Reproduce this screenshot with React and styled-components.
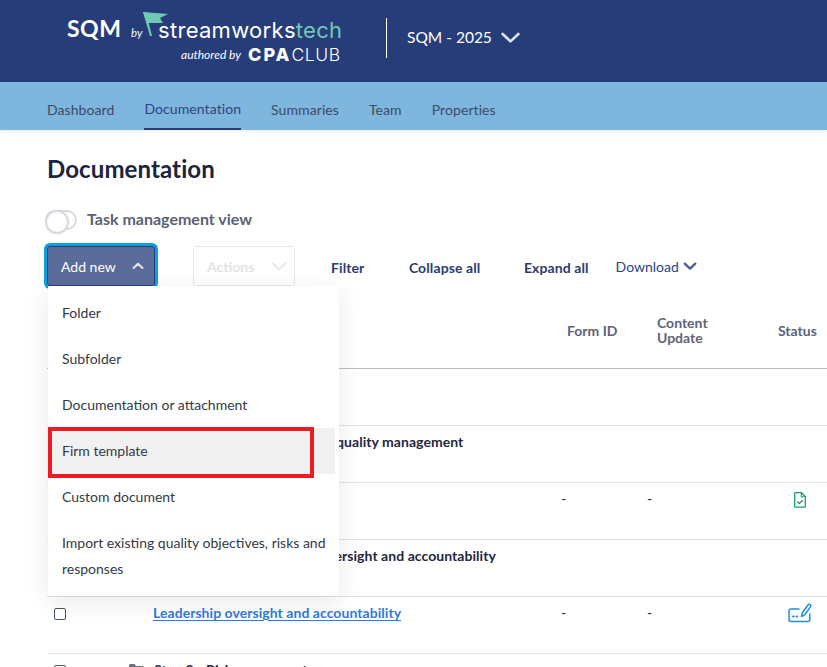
import React from "react";
import styled, { createGlobalStyle } from "styled-components";

const Global = createGlobalStyle`
  html, body { margin: 0; padding: 0; height: 667px; overflow: hidden; background: #fff; }
  body { font-family: Lato, "Liberation Sans", sans-serif; font-size: 14px; color: #1d2540; }
  * { box-sizing: border-box; }
`;

const Page = styled.div`position: relative; width: 827px; height: 667px; overflow: hidden;`;

const Header = styled.header`
  height: 82px; background: #273d7a; display: flex; align-items: flex-start; padding: 12px 0 0 67px; color: #fff;
`;
const Logo = styled.div`width: 319px; display: flex; flex-direction: column; flex: none;`;
const LogoTop = styled.div`display: flex; align-items: flex-start; height: 30px;`;
const Sqm = styled.span`font-size: 23px; font-weight: 700; line-height: 22px; margin-top: 5px; letter-spacing: 0.5px; width: 64px;`;
const By = styled.span`font-style: italic; font-size: 11.5px; line-height: 14px; margin: 14px 0 0 0; width: 12px; opacity: .95;`;
const Flag = styled.svg`flex: none;`;
const Brand = styled.span`
  font-family: Inter, sans-serif; font-size: 22px; line-height: 22px; margin: 7px 0 0 -11px; letter-spacing: .3px; font-weight: 400;
`;
const Teal = styled.span`color: #6fc9b5;`;
const LogoBottom = styled.div`display: flex; align-items: center; margin: 0 0 0 114px; height: 24px;`;
const Authored = styled.span`font-style: italic; font-size: 12px; width: 67px;`;
const Cpa = styled.span`font-family: Inter, sans-serif; font-size: 18px; font-weight: 800; letter-spacing: 2px;`;
const Club = styled.span`font-family: Inter, sans-serif; font-size: 17.5px; font-weight: 300; letter-spacing: .6px;`;
const Divider = styled.div`width: 1px; height: 40px; background: #fff; margin-top: 6px; flex: none;`;
const YearPick = styled.div`display: flex; align-items: center; margin: 5px 0 0 20px; height: 40px; gap: 8px; font-size: 15.5px;`;

const Nav = styled.nav`
  height: 48px; background: #7fb6dd; display: flex; padding-left: 47px; gap: 30px; box-shadow: 0 1px 3px rgba(0,0,0,.1);
`;
const Tab = styled.a`
  display: flex; align-items: center; height: 48px; font-size: 14px; letter-spacing: .08px;
  padding-top: 6px;
  color: ${p => p.$active ? "#2c4484" : "#3b4a68"};
  border-bottom: ${p => p.$active ? "2px solid #273d7a" : "0"};
`;

const Main = styled.main`padding-left: 47px;`;
const Title = styled.h1`margin: 24px 0 0; font-size: 24px; line-height: 30px; font-weight: 700; color: #1b2440; letter-spacing: .1px;`;
const ToggleRow = styled.div`display: flex; align-items: center; gap: 10px; margin: 26px 0 0 -2px; height: 20px;`;
const Toggle = styled.div`
  position: relative; width: 32px; height: 20px; border-radius: 10px; border: 2px solid #d8dadf; background: #fff;
  &::before {
    content: ""; position: absolute; left: -2px; top: -2px; width: 20px; height: 20px; border-radius: 50%;
    background: #fff; border: 2px solid #d8dadf; box-shadow: 0 0 2px rgba(0,0,0,.08);
  }
`;
const ToggleLabel = styled.span`font-size: 16px; line-height: 18px; font-weight: 700; color: #5a6277; margin-top: -2px;`;

const Toolbar = styled.div`display: flex; align-items: center; height: 40px; margin-top: 16px;`;
const AddButton = styled.button`
  width: 108px; height: 40px; border: 1px solid #273d7a; border-radius: 3px; background: #5b6c9b; color: #fff;
  font: 400 14px Lato, sans-serif; display: flex; align-items: center; justify-content: space-between; padding: 0 10px 0 13px;
  box-shadow: 0 0 0 3px #0aa0e0; flex: none;
`;
const ActionsButton = styled.button`
  width: 102px; height: 40px; margin-left: 38px; border: 1px solid #e8e8e8; border-radius: 3px; background: #fff; color: #e2e3e6;
  font: 700 14px Lato, sans-serif; display: flex; align-items: center; justify-content: space-between; padding: 0 6px 0 13px; flex: none;
`;
const ToolLink = styled.span`font-weight: 700; font-size: 14px; letter-spacing: .1px; color: #2a3c70; margin-left: ${p => p.$gap}px; padding-top: 2px;`;
const Download = styled.span`display: flex; align-items: center; gap: 4px; margin-left: 27px; color: #2c4484; font-size: 14px;`;

const grid = `display: grid; grid-template-columns: 82px 25px 408px 85px 131px 44px; width: 780px;`;
const TableHead = styled.div`${grid} margin-top: 8px; height: 75px; padding-bottom: 2px; align-items: center; border-bottom: 1px solid #bdbdbd;`;
const HeadCell = styled.div`font-weight: 700; font-size: 14px; line-height: 15px; color: #5b6478; grid-column: ${p => p.$col}; margin-left: ${p => p.$shift || 0}px; white-space: nowrap;`;
const Row = styled.div`${grid} height: 57px; border-bottom: 1px solid #e4e4e4; align-items: start; padding-top: 6px; line-height: 20px;`;
const CheckCell = styled.div`grid-column: 1; padding: 5px 0 0 7px;`;
const Check = styled.div`width: 12px; height: 12px; border: 1px solid #4a5572; border-radius: 2px; background: #fff;`;
const FolderCell = styled.div`grid-column: 2; padding-top: 2px;`;
const Name = styled.div`grid-column: 3; font-weight: 700; letter-spacing: .05px; color: #1f2742; white-space: nowrap; margin-left: ${p => p.$shift || 0}px;`;
const DocLink = styled.a`grid-column: 3; font-weight: 700; letter-spacing: .05px; margin-left: -1px; color: #2f7bd9; text-decoration: underline; text-underline-offset: 2px; white-space: nowrap; justify-self: start;`;
const Dash = styled.div`grid-column: ${p => p.$col}; color: #1f2742; margin-left: ${p => p.$shift || 0}px;`;
const StatusCell = styled.div`grid-column: 6; display: flex; justify-content: center; padding-top: ${p => p.$top}px;`;

const Menu = styled.div`
  position: absolute; left: 48px; top: 286px; width: 291px; height: 310px; background: #fff; padding: 4px 4px 4px 0;
  box-shadow: 0 6px 24px rgba(0,0,0,.09); z-index: 5;
`;
const MenuItem = styled.div`
  padding: 10px 4px 10px 14px; font-size: 14px; line-height: 26px; color: #333a45;
  background: ${p => p.$hover ? "#f1f1f1" : "transparent"};
`;
const RedMark = styled.div`
  position: absolute; left: 48px; top: 427px; width: 266px; height: 51px; border: 4px solid #ec1c24; z-index: 6;
`;

const Chevron = ({ up, color, size = 12, sw = 2 }) => (
  <svg width={size} height={size} viewBox="0 0 12 12" fill="none">
    <path d={up ? "M1.5 8 6 3.8 10.5 8" : "M1.5 4 6 8.2 10.5 4"} stroke={color} strokeWidth={sw} strokeLinecap="round" strokeLinejoin="round" />
  </svg>
);
const FolderIcon = () => (
  <svg width="15" height="13" viewBox="0 0 15 13"><path d="M0 1.5C0 .7.7 0 1.5 0h4L7 2h6.5c.8 0 1.5.7 1.5 1.5v8c0 .8-.7 1.5-1.5 1.5h-12C.7 13 0 12.3 0 11.5z" fill="#6a7183" /></svg>
);
const FileCheck = () => (
  <svg width="12" height="16" viewBox="0 0 12 16" fill="none" stroke="#12a17c">
    <path d="M.7 1.5c0-.5.3-.8.8-.8h6l3.800 3.800v9.900c0 .5-.3.8-.8.8H1.500c-.5 0-.8-.3-.8-.8z" strokeWidth="1.3" />
    <path d="M7.300.7v4h4" strokeWidth="1.1" />
    <path d="M3.300 9.500l2 2 3.500-3.300" strokeWidth="1.4" />
  </svg>
);
const EditIcon = () => (
  <svg width="24" height="20" viewBox="0 0 24 20" fill="none" stroke="#1f8fdd" strokeWidth="1.5" strokeLinecap="round" strokeLinejoin="round">
    <path d="M11 6H3C1.800 6 1 6.800 1 8v8.500C1 17.700 1.800 18.500 3 18.500h17c1.200 0 1.800-.8 1.800-2V11" />
    <path d="M13.500 13.500l.8-3.700L20 2c.6-.8 1.500-1 2.200-.4.700.6.800 1.500.2 2.300L16.800 11.800z" />
    <path d="M5 13.500h.8M8.500 13.500h.8" strokeWidth="1.8" />
  </svg>
);

export default function App() {
  return (
    <Page>
      <Global />
      <Header>
        <Logo>
          <LogoTop>
            <Sqm>SQM</Sqm>
            <By>by</By>
            <Flag width="26" height="26" viewBox="0 0 26 26">
              <path d="M0 0 25 2 17 6 20 11 4 11z" fill="#6fc9b5" />
              <path d="M0 0 3 0 9 24 7 24z" fill="#6fc9b5" />
            </Flag>
            <Brand>streamworks<Teal>tech</Teal></Brand>
          </LogoTop>
          <LogoBottom>
            <Authored>authored by</Authored>
            <Cpa>CPA</Cpa>
            <Club>CLUB</Club>
          </LogoBottom>
        </Logo>
        <Divider />
        <YearPick>
          SQM - 2025
          <Chevron color="#dfe4ef" size={21} sw={1.5} />
        </YearPick>
      </Header>
      <Nav>
        <Tab>Dashboard</Tab>
        <Tab $active>Documentation</Tab>
        <Tab>Summaries</Tab>
        <Tab>Team</Tab>
        <Tab>Properties</Tab>
      </Nav>
      <Main>
        <Title>Documentation</Title>
        <ToggleRow>
          <Toggle />
          <ToggleLabel>Task management view</ToggleLabel>
        </ToggleRow>
        <Toolbar>
          <AddButton>Add new <Chevron up color="#e4e7f0" size={12} /></AddButton>
          <ActionsButton>Actions <Chevron color="#e4e5e8" size={18} sw={1.1} /></ActionsButton>
          <ToolLink $gap={36}>Filter</ToolLink>
          <ToolLink $gap={44.5}>Collapse all</ToolLink>
          <ToolLink $gap={43.5}>Expand all</ToolLink>
          <Download>Download <Chevron color="#4a5d92" size={14} /></Download>
        </Toolbar>
        <TableHead>
          <HeadCell $col={4} $shift={5}>Form ID</HeadCell>
          <HeadCell $col={5} $shift={10}>Content<br />Update</HeadCell>
          <HeadCell $col={6}>Status</HeadCell>
        </TableHead>
        <Row />
        <Row>
          <Name $shift={-4}>Introduction to the system of quality management</Name>
        </Row>
        <Row>
          <Dash $col={4} $shift={-1}>-</Dash>
          <Dash $col={5}>-</Dash>
          <StatusCell $top={3}><FileCheck /></StatusCell>
        </Row>
        <Row>
          <Name $shift={-8}>Governance and leadership oversight and accountability</Name>
        </Row>
        <Row>
          <CheckCell><Check /></CheckCell>
          <DocLink>Leadership oversight and accountability</DocLink>
          <Dash $col={4} $shift={-1}>-</Dash>
          <Dash $col={5}>-</Dash>
          <StatusCell $top={0}><EditIcon /></StatusCell>
        </Row>
        <Row>
          <CheckCell><Check /></CheckCell>
          <FolderCell><FolderIcon /></FolderCell>
          <Name>Step 2 - Risk assessment</Name>
        </Row>
      </Main>
      <Menu>
        <MenuItem>Folder</MenuItem>
        <MenuItem>Subfolder</MenuItem>
        <MenuItem>Documentation or attachment</MenuItem>
        <MenuItem $hover>Firm template</MenuItem>
        <MenuItem>Custom document</MenuItem>
        <MenuItem>Import existing quality objectives, risks and responses</MenuItem>
      </Menu>
      <RedMark />
    </Page>
  );
}
